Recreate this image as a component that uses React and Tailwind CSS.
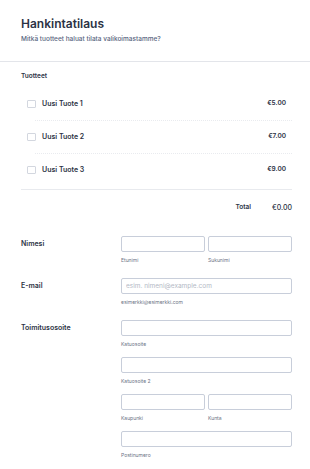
import React from 'react';

const products = [
  { id: 1, name: 'Uusi Tuote 1', price: '€5.00' },
  { id: 2, name: 'Uusi Tuote 2', price: '€7.00' },
  { id: 3, name: 'Uusi Tuote 3', price: '€9.00' },
];

const Input = ({ placeholder }) => (
  <input
    placeholder={placeholder}
    className="block w-full h-[16px] border border-[#c8ceda] rounded-[2px] bg-white px-[4px] text-[6.5px] text-[#2c3345] placeholder:text-[#b4b9c5] outline-none"
  />
);

const Sub = ({ children }) => (
  <div className="mt-[4px] text-[5px] leading-[8px] text-[#6b7385]">{children}</div>
);

const Row = ({ label, children }) => (
  <div className="flex">
    <div className="w-[100px] shrink-0 text-[7px] leading-[16px] font-semibold text-[#2c3345]">{label}</div>
    <div className="flex-1 min-w-0">{children}</div>
  </div>
);

export default function App() {
  return (
    <div className="w-[310px] min-h-[469px] bg-white" style={{ fontFamily: 'Inter, "Noto Sans", sans-serif' }}>
      <header className="px-[21px] pt-[16px] pb-[17px] border-b border-[#e3e5ea]">
        <h1 className="text-[12px] leading-[16px] font-semibold text-[#2c3345]">Hankintatilaus</h1>
        <p className="mt-[3px] text-[6.5px] leading-[9px] font-medium text-[#57647e]">
          Mitkä tuotteet haluat tilata valikoimastamme?
        </p>
      </header>

      <div className="pl-[21px] pr-[18px]">
        <div className="pt-[10px] text-[6.5px] leading-[9px] font-semibold text-[#2c3345]">Tuotteet</div>

        <div className="mt-[7px] pb-[3px] border-b border-[#e8eaee]">
          {products.map((p, i) => (
            <div key={p.id}>
              <div className="flex items-center h-[32px] pl-[6px] pr-[6px]">
                <span className="w-[9px] h-[8px] border border-[#d3d7df] rounded-[1px] bg-white shrink-0" />
                <span className="ml-[6px] text-[7px] font-semibold text-[#2c3345]">{p.name}</span>
                <span className="ml-auto text-[6.5px] font-semibold text-[#2c3345]">{p.price}</span>
              </div>
              {i < products.length - 1 && (
                <div className="ml-[14px] border-t border-dotted border-[#e9ebef]" />
              )}
            </div>
          ))}
        </div>

        <div className="flex justify-end items-center h-[9px] mt-[13px] leading-[9px]">
          <span className="text-[6.5px] font-semibold text-[#2c3345]">Total</span>
          <span className="ml-[21px] text-[7px] font-medium text-[#2c3345]">€0.00</span>
        </div>

        <div className="mt-[24px] flex flex-col gap-[14px]">
          <Row label="Nimesi">
            <div className="flex gap-[3px]">
              <div className="flex-1">
                <Input />
                <Sub>Etunimi</Sub>
              </div>
              <div className="flex-1">
                <Input />
                <Sub>Sukunimi</Sub>
              </div>
            </div>
          </Row>

          <Row label="E-mail">
            <Input placeholder="esim. nimeni@example.com" />
            <Sub>esimerkki@esimerkki.com</Sub>
          </Row>

          <Row label="Toimitusosoite">
            <div className="flex flex-col gap-[9px]">
              <div>
                <Input />
                <Sub>Katuosoite</Sub>
              </div>
              <div>
                <Input />
                <Sub>Katuosoite 2</Sub>
              </div>
              <div className="flex gap-[3px]">
                <div className="flex-1">
                  <Input />
                  <Sub>Kaupunki</Sub>
                </div>
                <div className="flex-1">
                  <Input />
                  <Sub>Kunta</Sub>
                </div>
              </div>
              <div>
                <Input />
                <Sub>Postinumero</Sub>
              </div>
            </div>
          </Row>
        </div>
      </div>
    </div>
  );
}
